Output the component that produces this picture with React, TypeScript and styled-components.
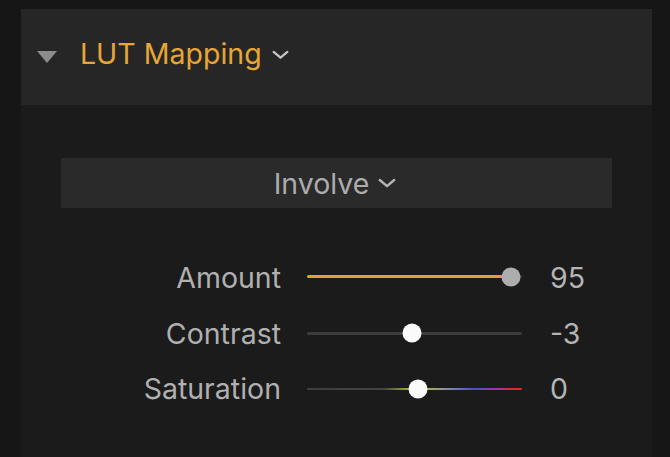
import React from 'react';
import styled, { createGlobalStyle } from 'styled-components';

const GlobalStyle = createGlobalStyle`
    html, body {
        margin: 0;
        padding: 0;
        background: #161616;
        height: 100%;
    }
    #root {
        height: 100%;
    }
`;

type TSlider = {
    label: string;
    value: number;
    pos: number;
    kind: 'amount' | 'contrast' | 'saturation';
};

const sliders: TSlider[] = [
    { label: 'Amount', value: 95, pos: 95, kind: 'amount' },
    { label: 'Contrast', value: -3, pos: 49, kind: 'contrast' },
    { label: 'Saturation', value: 0, pos: 51.5, kind: 'saturation' },
];

const Chevron = ({ w, color }: { w: number; color: string }) => (
    <svg width={w} height={w * 0.5} viewBox="0 0 18 9" fill="none">
        <path d="M2.5 1.8 L9 7.3 L15.5 1.8" stroke={color} strokeWidth="2.2" strokeLinecap="round" strokeLinejoin="round" />
    </svg>
);

const SliderRow = (props: TSlider) => {
    return (
        <>
            <SliderLabel>{props.label}</SliderLabel>
            <Track $kind={props.kind}>
                <Knob $kind={props.kind} style={{ left: `${props.pos}%` }} />
            </Track>
            <SliderValue>{props.value}</SliderValue>
        </>
    );
};

export default function App() {
    return (
        <>
            <GlobalStyle />
            <Page>
                <Panel>
                    <Header>
                        <Disclosure />
                        <Title>LUT Mapping</Title>
                        <HeaderChevron>
                            <Chevron w={19} color="#c4c4c4" />
                        </HeaderChevron>
                    </Header>
                    <Body>
                        <Dropdown>
                            <span>Involve</span>
                            <Chevron w={20} color="#b4b4b4" />
                        </Dropdown>
                        <SliderGrid>
                            {sliders.map((s) => (
                                <SliderRow key={s.label} {...s} />
                            ))}
                        </SliderGrid>
                    </Body>
                </Panel>
            </Page>
        </>
    );
}

const Page = styled.div`
    height: 100%;
    padding: 9px 18px 0 21px;
    box-sizing: border-box;
    font-family: Inter, 'Open Sans', sans-serif;
`;

const Panel = styled.div`
    width: 631px;
    height: 100%;
    background: #1b1b1b;
`;

const Header = styled.div`
    display: flex;
    align-items: center;
    height: 96px;
    padding-left: 16px;
    background: #262626;
    box-sizing: border-box;
`;

const Disclosure = styled.span`
    width: 0;
    height: 0;
    border-left: 10px solid transparent;
    border-right: 10px solid transparent;
    border-top: 12px solid #8c8c8c;
`;

const Title = styled.span`
    margin-left: 23px;
    margin-right: 9px;
    margin-bottom: 8px;
    font-size: 28.5px;
    font-weight: 400;
    color: #e7a635;
`;

const HeaderChevron = styled.span`
    display: flex;
    margin-bottom: 4px;
`;

const Body = styled.div`
    padding: 53px 40px 0;
`;

const Dropdown = styled.div`
    display: flex;
    align-items: center;
    justify-content: center;
    gap: 8px;
    height: 50px;
    background: #2a2a2a;
    font-size: 28.5px;
    color: #acacac;
    padding-right: 2px;
`;

const SliderGrid = styled.div`
    display: grid;
    grid-template-columns: 260px 215px auto;
    grid-auto-rows: 55.5px;
    align-items: center;
    column-gap: 26px;
    margin: 42px 0 0 -40px;
`;

const SliderLabel = styled.span`
    justify-self: end;
    font-size: 28.5px;
    color: #b0b0b0;
`;

const SliderValue = styled.span`
    margin-left: 2px;
    font-size: 28.5px;
    color: #b4b4b4;
`;

const trackBg = {
    amount: 'linear-gradient(to right, #e6a22e 0%, #e6a22e 95%, #3c3c3c 95%)',
    contrast: '#3c3c3c',
    saturation:
        'linear-gradient(to right, #3e3e3e 0%, #444 36%, #9aa43c 46%, #a8b04a 56%, #8c92a6 64%, #4a4ad0 78%, #a034b4 88%, #e0262a 95%, #e0262a 100%)',
};

const Track = styled.div<{ $kind: TSlider['kind'] }>`
    position: relative;
    height: ${(p) => (p.$kind === 'amount' ? '3px' : '2.5px')};
    background: ${(p) => trackBg[p.$kind]};
    border-radius: 2px;
    margin-top: ${(p) => (p.$kind === 'amount' ? '-2px' : '0')};
`;

const Knob = styled.div<{ $kind: TSlider['kind'] }>`
    position: absolute;
    top: 50%;
    width: 19px;
    height: 19px;
    border-radius: 50%;
    transform: translate(-50%, -50%);
    background: ${(p) => (p.$kind === 'amount' ? '#adadad' : '#fafafa')};
`;
